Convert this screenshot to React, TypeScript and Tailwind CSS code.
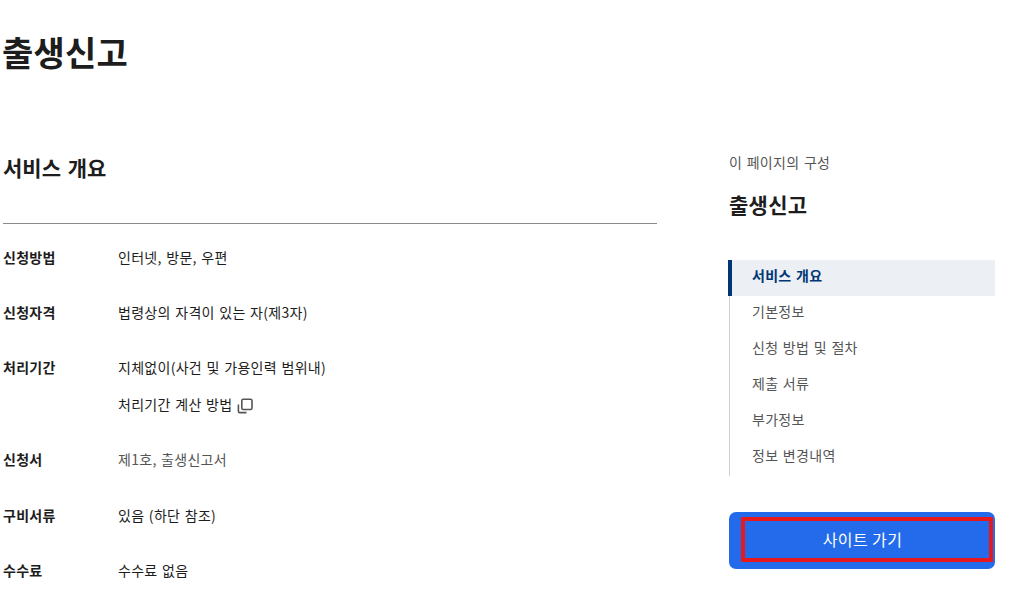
const rows = [
  { label: "신청방법", value: "인터넷, 방문, 우편" },
  { label: "신청자격", value: "법령상의 자격이 있는 자(제3자)" },
  { label: "처리기간", value: "지체없이(사건 및 가용인력 범위내)", link: "처리기간 계산 방법" },
  { label: "신청서", value: "제1호, 출생신고서", muted: true },
  { label: "구비서류", value: "있음 (하단 참조)" },
  { label: "수수료", value: "수수료 없음" },
];

const sections = ["서비스 개요", "기본정보", "신청 방법 및 절차", "제출 서류", "부가정보", "정보 변경내역"];

function WindowIcon() {
  return (
    <svg className="mt-[3px]" width="16" height="16" viewBox="0 0 16 16" fill="none" stroke="#555" strokeWidth="1.6">
      <rect x="4.8" y="1.3" width="10.2" height="10.2" rx="1.5" />
      <path d="M1.4 6.5v6.7c0 .9.5 1.4 1.4 1.4h6.7" />
    </svg>
  );
}

export default function App() {
  return (
    <div className="flex h-[596px] w-[1013px] overflow-hidden bg-white font-['Noto_Sans_CJK_KR',sans-serif] text-[14px] tracking-[0.29px] text-[#1d1d1d] [word-spacing:1.1px]">
      <main className="w-[657px] pl-[3px]">
        <h1 className="-ml-px pt-[27px] text-[34px] leading-[50px] font-bold tracking-[0.2px]">출생신고</h1>
        <h2 className="mt-[74px] text-[21px] leading-[32px] font-bold tracking-normal [word-spacing:2px]">서비스 개요</h2>
        <dl className="mt-[40px] border-t border-[#8a8a8a] pt-[20.6px]">
          {rows.map((row) => (
            <div key={row.label} className="mb-[31.2px] flex leading-[24px]">
              <dt className="w-[115px] font-bold">{row.label}</dt>
              <dd>
                <p className={row.muted ? "text-[#555]" : ""}>{row.value}</p>
                {row.link && (
                  <a href="#" className="mt-[13.2px] flex items-center gap-[5px]">
                    {row.link}
                    <WindowIcon />
                  </a>
                )}
              </dd>
            </div>
          ))}
        </dl>
      </main>
      <aside className="ml-[72px] w-[266px] pt-[150px]">
        <p className="leading-[24px] text-[#555]">이 페이지의 구성</p>
        <h2 className="mt-[14px] text-[21px] leading-[32px] font-bold">출생신고</h2>
        <nav className="mt-[40px]">
          {sections.map((name, i) => (
            <a
              key={name}
              href="#"
              className={
                i === 0
                  ? "-ml-px flex h-[36px] items-center border-l-4 border-[#003675] bg-[#eceff4] pb-[5px] pl-[20px] font-bold text-[#003675]"
                  : "flex h-[36px] items-center border-l border-[#cdd1d5] pb-[5px] pl-[22px] text-[#555]"
              }
            >
              {name}
            </a>
          ))}
        </nav>
        <button className="mt-[36px] h-[57px] w-full rounded-[7px] bg-[#246beb] pt-[5px] pr-[2px] pb-[7px] pl-[12px] text-[16px] text-white">
          <span className="flex h-full items-center justify-center border-4 border-[#e8191c] pr-[9px] pb-[2px] tracking-[0.4px]">사이트 가기</span>
        </button>
      </aside>
    </div>
  );
}
